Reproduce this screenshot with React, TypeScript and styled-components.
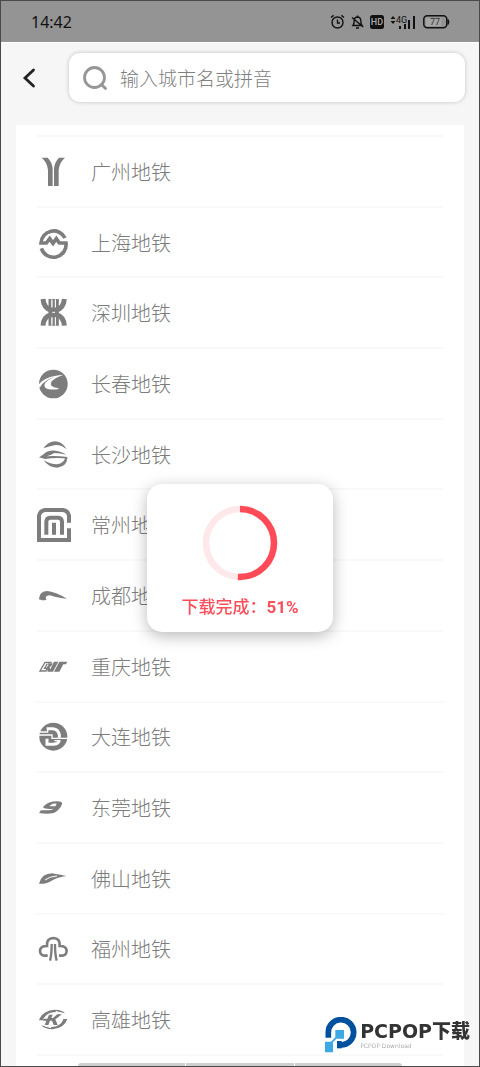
import React from 'react';
import styled, { createGlobalStyle } from 'styled-components';

const GlobalStyle = createGlobalStyle`
  * { box-sizing: border-box; }
  body {
    margin: 0;
    background: #f6f6f6;
    font-family: "Noto Sans", "Noto Sans CJK SC", sans-serif;
  }
`;

const Screen = styled.div`
  display: flex;
  flex-direction: column;
  min-height: 100vh;
  border: 1px solid #4b4b4b;
  background: #f6f6f6;
`;

const StatusBar = styled.header`
  display: flex;
  align-items: center;
  justify-content: space-between;
  height: 42px;
  padding: 0 29px 0 30px;
  background: #949494;
  border-bottom: 1px solid #fff;
  color: #111;
`;

const Clock = styled.time`
  font-size: 16px;
  line-height: 20px;
`;

const StatusIcons = styled.div`
  display: flex;
  align-items: center;
  gap: 6px;
`;

const SearchBar = styled.form`
  display: flex;
  align-items: center;
  gap: 24px;
  padding: 10px 14px 23px 12px;
`;

const BackButton = styled.button`
  display: grid;
  place-items: center;
  width: 32px;
  height: 32px;
  padding: 0;
  border: 0;
  background: none;
`;

const SearchField = styled.label`
  display: flex;
  flex: 1;
  align-items: center;
  gap: 12px;
  height: 49px;
  padding: 0 14px;
  border-radius: 11px;
  background: #fff;
  box-shadow: 0 0 4px rgba(0, 0, 0, 0.22);
`;

const SearchInput = styled.input`
  flex: 1;
  min-width: 0;
  padding: 0;
  border: 0;
  outline: 0;
  background: none;
  color: #555;
  font: 300 19px/28px "Noto Sans CJK SC", sans-serif;
  &::placeholder {
    color: #808080;
    opacity: 1;
  }
`;

const Card = styled.main`
  display: flex;
  flex: 1;
  flex-direction: column;
  margin: 0 15px;
  padding: 10px 21px 0;
  background: #fff;
`;

const CityList = styled.ul`
  display: grid;
  flex: 1;
  grid-auto-rows: 1fr;
  margin: 0;
  padding: 0;
  list-style: none;
  border-bottom: 2px solid #f9f9f9;
`;

const CityItem = styled.li`
  display: flex;
  border-top: 2px solid #f9f9f9;
`;

const CityButton = styled.button`
  display: flex;
  flex: 1;
  align-items: center;
  gap: 20px;
  min-height: 48px;
  padding: 1px 0 0;
  border: 0;
  background: none;
  color: #7c7c7c;
  font: 300 20px/30px "Noto Sans CJK SC", sans-serif;
  text-align: left;
`;

const PageTabs = styled.div`
  display: grid;
  grid-template-columns: repeat(3, 1fr);
  gap: 1px;
  height: 3px;
  margin: 7px 41px 0;
  border-radius: 3px 3px 0 0;
  overflow: hidden;
`;

const PageTab = styled.span`
  background: #cfcfcf;
`;

const Overlay = styled.div`
  position: fixed;
  inset: 48px 0 0;
  display: grid;
  place-items: center;
`;

const Dialog = styled.section`
  display: flex;
  flex-direction: column;
  align-items: center;
  gap: 12px;
  padding: 21px 34px 12px;
  border-radius: 15px;
  background: #fff;
  box-shadow: 0 4px 16px rgba(0, 0, 0, 0.28);
`;

const ProgressText = styled.p`
  margin: 0;
  color: #f94f5b;
  font: 500 17px/25px "Noto Sans CJK SC", sans-serif;
  white-space: nowrap;
`;

const Percent = styled.strong`
  font-family: Roboto, sans-serif;
  font-weight: 700;
`;

const Watermark = styled.aside`
  position: fixed;
  right: 10px;
  bottom: 14px;
  display: flex;
  align-items: center;
  gap: 3px;
`;

const BrandText = styled.div`
  display: flex;
  flex-direction: column;
  color: #333;
`;

const BrandName = styled.span`
  font: 900 19px/22px "DejaVu Sans", "Noto Sans CJK SC", sans-serif;
  white-space: nowrap;
`;

const BrandTag = styled.span`
  color: #666;
  font: 300 6px/8px "DejaVu Sans", sans-serif;
`;

const G = '#7d7d7d';
const line = (width: number) => ({ fill: 'none', stroke: G, strokeWidth: width });
const cut = (width: number) => ({ fill: 'none', stroke: '#fff', strokeWidth: width });

const cities: { name: string; mark: React.ReactNode }[] = [
  {
    name: '广州地铁',
    mark: (
      <path d="M14 8H32Q46 22 47 42V93H33V45Q31 22 14 8ZM84 8H66Q52 22 51 42V93H65V45Q67 22 84 8Z" />
    ),
  },
  {
    name: '上海地铁',
    mark: (
      <path
        {...line(11)}
        d="M84 36A38 38 0 0 0 12 51H28L38 38L48 52L58 38L67 51H87A38 38 0 0 1 13 67"
      />
    ),
  },
  {
    name: '深圳地铁',
    mark: (
      <>
        <path {...line(15)} d="M18 9Q20 36 42 42H58Q80 36 82 9M18 89Q20 62 42 56H58Q80 62 82 89" />
        <path {...line(9)} d="M39 9V89M61 9V89M50 9V40M50 58V89" />
        <path {...cut(3)} d="M45 12V34M55 12V34M45 64V86M55 64V86M46 49H54" />
      </>
    ),
  },
  {
    name: '长春地铁',
    mark: (
      <>
        <circle cx="49" cy="51" r="43" />
        <path
          fill="#fff"
          d="M4 54Q22 27 80 23Q55 31 44 43Q34 60 62 63L66 66Q22 72 22 55Q26 37 58 29Q25 34 8 62Z"
        />
      </>
    ),
  },
  {
    name: '长沙地铁',
    mark: (
      <>
        <path d="M19 31Q34 10 55 10Q77 12 89 34Q73 20 55 21Q36 25 19 31Z" />
        <path d="M6 58Q22 48 28 42Q50 30 89 50Q70 46 52 45Q44 51 29 55Q60 53 91 57V62Q60 57 24 63Z" />
        <path d="M20 67Q40 79 60 79Q82 75 84 61H91Q89 86 60 89Q34 88 20 67Z" />
      </>
    ),
  },
  {
    name: '常州地铁',
    mark: (
      <path
        {...line(12)}
        d="M96 44V23Q93 8 78 6H24Q9 8 6 23V96H96V61M28 80V40Q29 30 39 29H64Q74 30 75 40V80M51 44V80"
      />
    ),
  },
  {
    name: '成都地铁',
    mark: (
      <path d="M6 59Q7 37 32 36Q58 40 90 59Q62 56 44 50Q32 47 26 54L28 62Q18 65 11 62Q6 62 6 59Z" />
    ),
  },
  {
    name: '重庆地铁',
    mark: (
      <>
        <path {...line(4)} d="M44 37H24L9 63H27L31 55H23L31 41" />
        <path d="M33 40H47L43 48L38 51L41 65H32L29 51L34 47ZM51 35H64L48 65H36ZM67 35H91L87 43H79L67 65H51L63 43H63Z" />
      </>
    ),
  },
  {
    name: '大连地铁',
    mark: (
      <>
        <circle cx="49" cy="50" r="42" />
        <path {...cut(9)} d="M29 26H48Q64 27 67 45V53M30 56V73H48Q64 72 67 61" />
        <path {...cut(4)} d="M5 36H32V24M5 45H45V55H94M52 62H70" />
      </>
    ),
  },
  {
    name: '东莞地铁',
    mark: (
      <path
        fillRule="evenodd"
        d="M20 46Q34 31 60 31Q78 31 75 40Q68 58 50 66Q30 70 6 66L12 58H36Q46 57 50 53Q36 55 22 52Q16 50 20 46ZM42 41L37 46H55L59 38Q48 37 42 41Z"
      />
    ),
  },
  {
    name: '佛山地铁',
    mark: (
      <>
        <path d="M6 65Q14 34 46 34L56 36Q70 38 88 42Q62 45 44 56Q22 68 6 65Z" />
        <path {...cut(3)} d="M24 54Q38 43 60 42" />
      </>
    ),
  },
  {
    name: '福州地铁',
    mark: (
      <>
        <path
          {...line(8)}
          d="M32 70Q9 74 9 56Q10 42 30 42Q28 19 49 18Q70 19 68 42Q88 42 89 56Q89 74 66 70"
        />
        <path {...line(7)} d="M44 36Q44 68 39 86M54 36Q54 68 59 86" />
      </>
    ),
  },
  {
    name: '高雄地铁',
    mark: (
      <>
        <path d="M6 52Q16 22 53 20Q76 20 84 31Q60 23 38 30Q22 38 17 52ZM91 48Q82 76 46 79Q22 78 13 67Q36 76 58 70Q76 62 79 48Z" />
        <path d="M36 35H47L43 45H48L61 34H75L55 49L62 66H50L45 53H39L34 66H23L28 53H17L20 47H31Z" />
        <path {...cut(3)} d="M56 25Q74 28 82 38M15 60Q24 72 42 74" />
      </>
    ),
  },
];

function StatusGlyphs() {
  return (
    <StatusIcons>
      <svg width="15" height="16" viewBox="0 0 15 16" fill="none" stroke="#111" strokeWidth="1.4">
        <circle cx="7.5" cy="8.5" r="5.5" />
        <path d="M7.5 5.5V9H10M1 3.5L3.6 1.4M14 3.5L11.4 1.4" />
      </svg>
      <svg width="13" height="16" viewBox="0 0 13 16" fill="none" stroke="#111" strokeWidth="1.4">
        <path d="M2 11.5Q3.2 10 3.2 6.5Q3.3 3.2 6.5 3Q9.7 3.2 9.8 6.5Q9.8 10 11 11.5ZM6.5 1.5V3M5 14H8M1 3.5L12.2 13" />
      </svg>
      <svg width="14" height="14" viewBox="0 0 14 14">
        <rect width="14" height="14" rx="2.5" fill="#111" />
        <text x="7" y="10" textAnchor="middle" fontFamily="Roboto" fontWeight="500" fontSize="9" fill="#aaa">
          HD
        </text>
      </svg>
      <svg width="27" height="16" viewBox="0 0 27 16" fill="#111">
        <path d="M.5 5L3 2L5.5 5ZM.5 7H5.5L3 10ZM9 12H11V15H9ZM14 10H16V15H14ZM18 6H20V15H18ZM23 2H25V15H23Z" />
        <text x="6" y="9" fontFamily="Roboto" fontWeight="400" fontSize="9">
          4G
        </text>
      </svg>
      <svg width="27" height="14" viewBox="0 0 27 14">
        <rect x=".8" y=".8" width="23" height="12" rx="3.5" fill="none" stroke="#111" strokeWidth="1.5" />
        <rect x="3" y="3" width="15" height="8" fill="#a5a5a5" />
        <path d="M25 4.5Q27 7 25 9.5Z" fill="#111" stroke="#111" />
        <text x="12" y="10" textAnchor="middle" fontFamily="Roboto" fontSize="9" fill="#333">
          77
        </text>
      </svg>
    </StatusIcons>
  );
}

function ProgressRing({ value }: { value: number }) {
  return (
    <svg
      width="76"
      height="76"
      viewBox="0 0 76 76"
      fill="none"
      strokeWidth="6.5"
      role="progressbar"
      aria-valuenow={value}
      aria-label="下载进度"
    >
      <circle cx="38" cy="38" r="34" stroke="#ffe8ea" />
      <circle
        cx="38"
        cy="38"
        r="34"
        stroke="#ff4b57"
        pathLength="100"
        strokeDasharray={`${value} 100`}
        transform="rotate(-90 38 38)"
      />
    </svg>
  );
}

export default function App() {
  return (
    <>
      <GlobalStyle />
      <Screen>
        <StatusBar>
          <Clock>14:42</Clock>
          <StatusGlyphs />
        </StatusBar>
        <SearchBar>
          <BackButton type="button" aria-label="返回">
            <svg width="14" height="22" viewBox="0 0 14 22" fill="none" stroke="#222" strokeWidth="2.8" strokeLinecap="round">
              <path d="M11.5 3L3 11L11.5 19" />
            </svg>
          </BackButton>
          <SearchField>
            <svg width="25" height="26" viewBox="0 0 25 26" fill="none" stroke="#969696" strokeWidth="2.8" strokeLinecap="round">
              <circle cx="11.5" cy="12.5" r="10" />
              <path d="M18.5 19.5L22.5 23.5" />
            </svg>
            <SearchInput type="text" placeholder="输入城市名或拼音" aria-label="搜索城市" />
          </SearchField>
        </SearchBar>
        <Card>
          <CityList>
            {cities.map((city) => (
              <CityItem key={city.name}>
                <CityButton type="button">
                  <svg width="34" height="34" viewBox="0 0 102 102" fill={G} aria-hidden="true">
                    {city.mark}
                  </svg>
                  {city.name}
                </CityButton>
              </CityItem>
            ))}
          </CityList>
          <PageTabs>
            <PageTab />
            <PageTab />
            <PageTab />
          </PageTabs>
        </Card>
      </Screen>
      <Overlay>
        <Dialog role="dialog" aria-label="下载">
          <ProgressRing value={51} />
          <ProgressText>
            下载完成：<Percent>51%</Percent>
          </ProgressText>
        </Dialog>
      </Overlay>
      <Watermark>
        <svg width="32" height="36" viewBox="0 0 96 108" aria-hidden="true">
          <path d="M10 62V48A38 38 0 1 1 48 84H36" fill="none" stroke="#00519d" strokeWidth="17" />
          <path d="M36 72H50V94H36Z" fill="#00519d" />
          <path d="M31 39H57V65H34L24 76V106H0V74H18L31 61Z" fill="#3ba9e4" />
        </svg>
        <BrandText>
          <BrandName>PCPOP下载</BrandName>
          <BrandTag>PCPOP Download</BrandTag>
        </BrandText>
      </Watermark>
    </>
  );
}
